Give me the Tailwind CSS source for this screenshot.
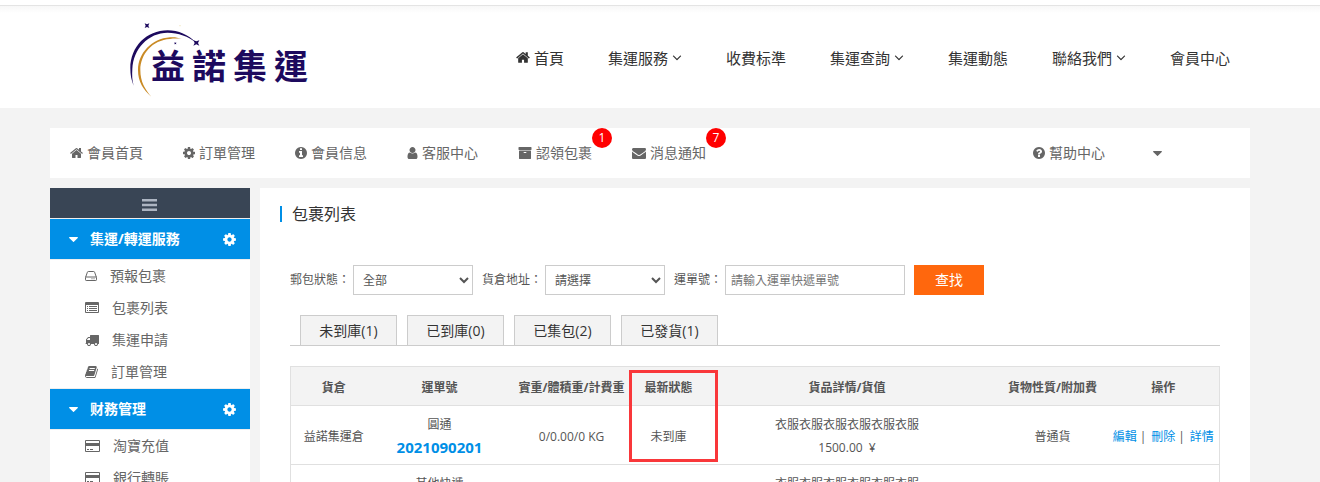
<!DOCTYPE html>
<html lang="zh-Hant">
<head>
    <meta charset="UTF-8">
    <meta name="viewport" content="width=device-width, initial-scale=1.0">
    <title>益諾集運 - 包裹列表</title>
    <script src="https://cdn.jsdelivr.net/npm/@tailwindcss/browser@4"></script>
</head>
<body class="h-screen overflow-hidden bg-[#f3f3f3] font-['Open_Sans','Noto_Sans_CJK_TC',sans-serif] text-xs text-[#555]">

    <!-- Icon sprite -->
    <svg class="hidden">
        <symbol id="i-home" viewBox="64 0 1664 1792"><path d="M1472 992v480q0 26-19 45t-45 19h-384v-384h-256v384h-384q-26 0-45-19t-19-45v-480q0-1 .5-3t.5-3l575-474 575 474q1 2 1 6zm223-69l-62 74q-8 9-21 11h-3q-13 0-21-7l-692-577-692 577q-12 8-24 7-13-2-21-11l-62-74q-8-10-7-23.5t11-21.5l719-599q32-26 76-26t76 26l244 204v-195q0-14 9-23t23-9h192q14 0 23 9t9 23v408l219 182q10 8 11 21.5t-7 23.5z"/></symbol>
        <symbol id="i-cog" viewBox="128 0 1536 1792"><path d="M1152 896q0-106-75-181t-181-75-181 75-75 181 75 181 181 75 181-75 75-181zm512-109v222q0 12-8 23t-20 13l-185 28q-19 54-39 91 35 50 107 138 10 12 10 25t-9 23q-27 37-99 108t-94 71q-12 0-26-9l-138-108q-44 23-91 38-16 136-29 186-7 28-36 28h-222q-14 0-24.5-8.5t-11.5-21.5l-28-184q-49-16-90-37l-141 107q-10 9-25 9-14 0-25-11-126-114-165-168-7-10-7-23 0-12 8-23 15-21 51-66.5t54-70.5q-27-50-41-99l-183-27q-13-2-21-12.5t-8-23.5v-222q0-12 8-23t19-13l186-28q14-46 39-92-40-57-107-138-10-12-10-24 0-10 9-23 26-36 98.5-107.5t94.5-71.5q13 0 26 10l138 107q44-23 91-38 16-136 29-186 7-28 36-28h222q14 0 24.5 8.5t11.5 21.5l28 184q49 16 90 37l142-107q9-9 24-9 13 0 25 10 129 119 165 170 7 8 7 22 0 12-8 23-15 21-51 66.5t-54 70.5q26 50 41 98l183 28q13 2 21 12.5t8 23.5z"/></symbol>
        <symbol id="i-info" viewBox="128 0 1536 1792"><path d="M1152 1376v-160q0-14-9-23t-23-9h-96v-512q0-14-9-23t-23-9h-320q-14 0-23 9t-9 23v160q0 14 9 23t23 9h96v320h-96q-14 0-23 9t-9 23v160q0 14 9 23t23 9h448q14 0 23-9t9-23zm-128-896v-160q0-14-9-23t-23-9h-192q-14 0-23 9t-9 23v160q0 14 9 23t23 9h192q14 0 23-9t9-23zm640 416q0 209-103 385.5t-279.5 279.5-385.5 103-385.5-103-279.5-279.5-103-385.5 103-385.5 279.5-279.5 385.5-103 385.5 103 279.5 279.5 103 385.5z"/></symbol>
        <symbol id="i-user" viewBox="256 0 1280 1792"><path d="M1536 1399q0 109-62.5 187t-150.5 78h-854q-88 0-150.5-78t-62.5-187q0-85 8.5-160.5t31.5-152 58.5-131 94-89 134.5-34.5q131 128 313 128t313-128q76 0 134.5 34.5t94 89 58.5 131 31.5 152 8.5 160.5zm-256-887q0 159-112.5 271.5t-271.5 112.5-271.5-112.5-112.5-271.5 112.5-271.5 271.5-112.5 271.5 112.5 112.5 271.5z"/></symbol>
        <symbol id="i-archive" viewBox="0 0 1792 1792"><path d="M1088 832q0-26-19-45t-45-19h-256q-26 0-45 19t-19 45 19 45 45 19h256q26 0 45-19t19-45zm576-192v960q0 26-19 45t-45 19h-1408q-26 0-45-19t-19-45v-960q0-26 19-45t45-19h1408q26 0 45 19t19 45zm64-448v256q0 26-19 45t-45 19h-1536q-26 0-45-19t-19-45v-256q0-26 19-45t45-19h1536q26 0 45 19t19 45z"/></symbol>
        <symbol id="i-envelope" viewBox="0 0 1792 1792"><path d="M1792 710v794q0 66-47 113t-113 47h-1472q-66 0-113-47t-47-113v-794q44 49 101 87 362 246 497 345 57 42 92.5 65.5t94.5 48 110 24.5h2q51 0 110-24.5t94.5-48 92.5-65.5q170-123 498-345 57-39 100-87zm0-294q0 79-49 151t-122 123q-376 261-468 325-10 7-42.5 31t-54 38.5-52 32.5-57.5 27-50 9h-2q-23 0-50-9t-57.5-27-52-32.5-54-38.5-42.5-31q-91-64-262-182.5t-205-142.5q-62-42-117-115.5t-55-136.5q0-78 41.5-130t118.5-52h1472q65 0 112.5 47t47.5 113z"/></symbol>
        <symbol id="i-question" viewBox="128 0 1536 1792"><path d="M1024 1376v-192q0-14-9-23t-23-9h-192q-14 0-23 9t-9 23v192q0 14 9 23t23 9h192q14 0 23-9t9-23zm256-672q0-88-55.5-163t-138.5-116-170-41q-243 0-371 213-15 24 8 42l132 100q7 6 19 6 16 0 25-12 53-68 86-92 34-24 86-24 48 0 85.5 26t37.5 59q0 38-20 61t-68 45q-63 28-115.5 86.5t-52.5 125.5v36q0 14 9 23t23 9h192q14 0 23-9t9-23q0-19 21.5-49.5t54.5-49.5q32-18 49-28.5t46-35 44.5-48 28-60.5 12.5-81zm384 192q0 209-103 385.5t-279.5 279.5-385.5 103-385.5-103-279.5-279.5-103-385.5 103-385.5 279.5-279.5 385.5-103 385.5 103 279.5 279.5 103 385.5z"/></symbol>
        <symbol id="i-caret" viewBox="384 640 1024 576"><path d="M1408 704q0 26-19 45l-448 448q-19 19-45 19t-45-19l-448-448q-19-19-19-45t19-45 45-19h896q26 0 45 19t19 45z"/></symbol>
        <symbol id="i-angle" viewBox="320 0 1152 1792"><path d="M1395 736q0 13-10 23l-466 466q-10 10-23 10t-23-10l-466-466q-10-10-10-23t10-23l50-50q10-10 23-10t23 10l393 393 393-393q10-10 23-10t23 10l50 50q10 10 10 23z"/></symbol>
        <symbol id="i-hdd" viewBox="0 0 12 14"><path d="M.5 8.5 2.4 3.2q.2-.7.9-.7h5.4q.7 0 .9.7l1.9 5.3v2.3q0 .7-.7.7H1.2q-.7 0-.7-.7zM.5 8h11" fill="none" stroke="currentColor"/><path d="M6.5 9.300h1v1h-1zM8.500 9.300h1v1h-1z"/></symbol>
        <symbol id="i-list" viewBox="0 0 14 14"><path d="M1 1h12q1 0 1 1v9q0 1-1 1H1q-1 0-1-1V2q0-1 1-1zm0 3v7h12V4zM2 5h1v1H2zm2 0h8v1H4zM2 7h1v1H2zm2 0h8v1H4zM2 9h1v1H2zm2 0h8v1H4z" fill-rule="evenodd"/></symbol>
        <symbol id="i-truck" viewBox="0 0 1792 1792"><path d="M640 1408q0-52-38-90t-90-38-90 38-38 90 38 90 90 38 90-38 38-90zm-384-512h384v-256h-158q-13 0-22 9l-195 195q-9 9-9 22v30zm1280 512q0-52-38-90t-90-38-90 38-38 90 38 90 90 38 90-38 38-90zm256-1088v1024q0 15-4 26.5t-13.5 18.5-16.5 11.5-23.5 6-22.5 2-25.5 0-22.5-.5q0 106-75 181t-181 75-181-75-75-181h-384q0 106-75 181t-181 75-181-75-75-181h-64q-3 0-22.5.5t-25.5 0-22.5-2-23.5-6-16.5-11.5-13.5-18.5-4-26.5q0-26 19-45t45-19v-320q0-8-.5-35t0-38 2.5-34.5 6.5-37 14-30.5 22.5-30l198-198q19-19 50.5-32t58.5-13h160v-192q0-26 19-45t45-19h1024q26 0 45 19t19 45z"/></symbol>
        <symbol id="i-book" viewBox="64 0 1664 1792"><path d="M1703 478q40 57 18 129l-275 906q-19 64-76.5 107.5t-122.5 43.5h-923q-77 0-148.5-53.5t-99.5-131.5q-24-67-2-127 0-4 3-27t4-37q1-8-3-21.5t-3-19.5q2-11 8-21t16.5-23.5 16.5-23.5q23-38 45-91.5t30-91.5q3-10 .5-30t-.5-28q3-11 17-28t17-23q21-36 42-92t25-90q1-9-2.5-32t.5-28q4-13 22-30.5t22-22.5q19-26 42.5-84.5t27.5-96.5q1-8-3-25.5t-2-26.5q2-8 9-18t18-23 17-21q8-12 16.5-30.5t15-35 16-36 19.5-32 26.5-23.5 36-11.5 47.5 5.5l-1 3q38-9 51-9h761q74 0 114 56t18 130l-274 906q-36 119-71.5 153.5t-128.5 34.5h-869q-27 0-38 15-11 16-1 43 24 70 144 70h923q29 0 56-15.5t35-41.5l300-987q7-22 5-57 38 15 59 43zm-1064 2q-4 13 2 22.5t20 9.5h608q13 0 25.5-9.5t16.5-22.5l21-64q4-13-2-22.5t-20-9.5h-608q-13 0-25.5 9.5t-16.5 22.5zm-83 256q-4 13 2 22.5t20 9.5h608q13 0 25.5-9.5t16.5-22.5l21-64q4-13-2-22.5t-20-9.5h-608q-13 0-25.5 9.5t-16.5 22.5z"/></symbol>
        <symbol id="i-card" viewBox="0 0 15 14"><path d="M1 1h13q1 0 1 1v10q0 1-1 1H1q-1 0-1-1V2q0-1 1-1zm0 1v2h13V2zm0 5v5h13V7zm1 3h2v1H2zm3 0h3v1H5z" fill-rule="evenodd"/></symbol>
    </svg>

    <!-- Header -->
    <header class="bg-white pt-[5px]">
        <div class="h-2 border-t border-[#e4e4e4] bg-gradient-to-b from-[#f7f7f7] to-white"></div>
        <div class="flex h-[95px] items-start justify-between pt-[7px] pr-[90px] pl-[127px]">
            <a href="#" class="relative flex h-20 items-center pt-3 pl-6">
                <svg class="absolute top-0 left-0 h-20 w-[77px]" viewBox="51 60 231 240">
                    <path fill="#1d0a5e" d="M258 127C235 105 205 91 173 91 110 91 61 140 61 205c0 20 3 36 10 52-5-17-5-32-4-50 2-60 48-109 106-109 32 0 62 12 85 29z"/>
                    <path fill="#c98a24" d="M215 117c-14-6-25-6-35-5-55 4-96 48-96 98 0 35 16 60 40 80-19-22-33-45-33-80 0-47 36-90 89-93 10-2 25-2 35 0z"/>
                    <path fill="#1d0a5e" d="M104 70l7 3 7-3-3 7 3 7-7-3-7 3 3-7zM250 121l9 3 9-3-4 8 4 8-9-4-9 4 4-8zM193 127l3 1 3-1-1 3 1 3-3-1-3 1 1-3z"/>
                    <circle cx="210" cy="77" r="2" fill="#efe3b8"/>
                </svg>
                <span class="relative flex gap-[7px] text-[34px] leading-10 font-bold text-[#1d0a5e]"><span>益</span><span>諾</span><span>集</span><span>運</span></span>
            </a>
            <nav class="flex h-[76px] items-center gap-11 text-[15px] text-[#333]">
                <a href="#" class="flex items-center gap-1"><svg class="h-[15px] w-[14px] fill-current"><use href="#i-home"/></svg>首頁</a>
                <a href="#" class="flex items-center gap-1">集運服務<svg class="h-[15px] w-[10px] fill-current"><use href="#i-angle"/></svg></a>
                <a href="#">收費标準</a>
                <a href="#" class="flex items-center gap-1">集運查詢<svg class="h-[15px] w-[10px] fill-current"><use href="#i-angle"/></svg></a>
                <a href="#">集運動態</a>
                <a href="#" class="flex items-center gap-1">聯絡我們<svg class="h-[15px] w-[10px] fill-current"><use href="#i-angle"/></svg></a>
                <a href="#">會員中心</a>
            </nav>
        </div>
    </header>

    <div class="pt-5 pr-[70px] pl-[50px]">
        <!-- Member bar -->
        <nav class="flex h-[50px] bg-white text-sm text-[#666]">
            <a href="#" class="flex items-center gap-1 px-5"><svg class="h-3.5 w-[13px] fill-current"><use href="#i-home"/></svg>會員首頁</a>
            <a href="#" class="flex items-center gap-1 px-5"><svg class="h-3.5 w-3 fill-current"><use href="#i-cog"/></svg>訂單管理</a>
            <a href="#" class="flex items-center gap-1 px-5"><svg class="h-3.5 w-3 fill-current"><use href="#i-info"/></svg>會員信息</a>
            <a href="#" class="flex items-center gap-1 px-5"><svg class="h-3.5 w-[11px] fill-current"><use href="#i-user"/></svg>客服中心</a>
            <a href="#" class="relative flex items-center gap-1 px-5"><svg class="h-3.5 w-3.5 fill-current"><use href="#i-archive"/></svg>認領包裹<span class="absolute top-0 right-0 size-5 rounded-full bg-[#f00] text-center text-xs leading-5 text-white">1</span></a>
            <a href="#" class="relative flex items-center gap-1 px-5"><svg class="h-3.5 w-3.5 fill-current"><use href="#i-envelope"/></svg>消息通知<span class="absolute top-0 right-0 size-5 rounded-full bg-[#f00] text-center text-xs leading-5 text-white">7</span></a>
            <div class="ml-auto flex gap-12 pr-[88px]">
                <a href="#" class="flex items-center gap-1"><svg class="h-3.5 w-3 fill-current"><use href="#i-question"/></svg>幫助中心</a>
                <button type="button" aria-label="更多"><svg class="h-[5px] w-[9px] fill-current"><use href="#i-caret"/></svg></button>
            </div>
        </nav>

        <div class="mt-2.5 flex gap-2.5">
            <!-- Sidebar -->
            <aside class="w-[200px] shrink-0 bg-white text-sm text-[#666]">
                <button type="button" aria-label="收起選單" class="flex h-[30px] w-full items-center justify-center bg-[#394555] pt-1 text-[#adb5c2]">
                    <svg class="h-3 w-4 fill-current" viewBox="0 0 16 12"><path d="M0 0h15v2.600H0zM0 4.700h15v2.600H0zM0 9.400h15V12H0z"/></svg>
                </button>

                <h3 class="flex h-[42px] items-center border-y border-[#eee] bg-[#008fe6] pr-3.5 pl-[19px] font-bold text-white">
                    <svg class="h-[5px] w-[9px] fill-current"><use href="#i-caret"/></svg>
                    <span class="ml-3">集運/轉運服務</span>
                    <svg class="ml-auto h-[15px] w-[13px] fill-current"><use href="#i-cog"/></svg>
                </h3>
                <ul>
                    <li><a href="#" class="flex h-8 items-center gap-[13px] pl-[35px]"><svg class="h-3.5 w-3 fill-current"><use href="#i-hdd"/></svg>預報包裹</a></li>
                    <li><a href="#" class="flex h-8 items-center gap-[13px] pl-[35px]"><svg class="h-3.5 w-3.5 fill-current"><use href="#i-list"/></svg>包裹列表</a></li>
                    <li><a href="#" class="flex h-8 items-center gap-[13px] pl-[35px]"><svg class="h-3.5 w-3.5 fill-current"><use href="#i-truck"/></svg>集運申請</a></li>
                    <li><a href="#" class="flex h-8 items-center gap-[13px] pl-[35px]"><svg class="h-3.5 w-[13px] fill-current"><use href="#i-book"/></svg>訂單管理</a></li>
                </ul>

                <h3 class="flex h-[42px] items-center border-y border-[#eee] bg-[#008fe6] pr-3.5 pl-[19px] font-bold text-white">
                    <svg class="h-[5px] w-[9px] fill-current"><use href="#i-caret"/></svg>
                    <span class="ml-3">财務管理</span>
                    <svg class="ml-auto h-[15px] w-[13px] fill-current"><use href="#i-cog"/></svg>
                </h3>
                <ul>
                    <li><a href="#" class="flex h-8 items-center gap-[13px] pl-[35px]"><svg class="h-3.5 w-[15px] fill-current"><use href="#i-card"/></svg>淘寶充值</a></li>
                    <li><a href="#" class="flex h-8 items-center gap-[13px] pl-[35px]"><svg class="h-3.5 w-[15px] fill-current"><use href="#i-card"/></svg>銀行轉賬</a></li>
                </ul>
            </aside>

            <!-- Parcel list -->
            <main class="min-w-0 flex-1 bg-white px-[30px] pt-[18px]">
                <h1 class="-ml-2.5 border-l-2 border-[#008fe6] pl-2.5 text-base leading-4 text-[#333]">包裹列表</h1>

                <form class="mt-[43px] flex items-center">
                    <label for="status">郵包狀態：</label>
                    <select id="status" class="ml-[3px] h-[30px] w-[120px] border border-[#ccc] bg-white pl-[5px]">
                        <option>全部</option>
                    </select>
                    <label for="warehouse" class="ml-[9px]">貨倉地址：</label>
                    <select id="warehouse" class="ml-[3px] h-[30px] w-[120px] border border-[#ccc] bg-white pl-[5px]">
                        <option>請選擇</option>
                    </select>
                    <label for="waybill" class="ml-[9px]">運單號：</label>
                    <input id="waybill" type="text" placeholder="請輸入運單快遞單號" class="ml-[3px] h-[30px] w-[180px] border border-[#ccc] px-[5px] placeholder:text-[#757575]">
                    <button type="submit" class="ml-[9px] h-[30px] w-[70px] bg-[#ff670d] text-sm text-white">查找</button>
                </form>

                <div class="mt-5 flex gap-2.5 border-b border-[#ccc] px-2.5 text-sm text-[#333]">
                    <button type="button" class="h-[30px] min-w-[97px] border border-b-0 border-[#ccc] bg-[#f3f3f3] px-4">未到庫(1)</button>
                    <button type="button" class="h-[30px] min-w-[97px] border border-b-0 border-[#ccc] bg-[#f3f3f3] px-4">已到庫(0)</button>
                    <button type="button" class="h-[30px] min-w-[97px] border border-b-0 border-[#ccc] bg-[#f3f3f3] px-4">已集包(2)</button>
                    <button type="button" class="h-[30px] min-w-[97px] border border-b-0 border-[#ccc] bg-[#f3f3f3] px-4">已發貨(1)</button>
                </div>

                <div class="relative mt-5">
                    <table class="w-full table-fixed border border-[#e0e0e0] text-center leading-[23px]">
                        <colgroup>
                            <col class="w-[86px]">
                            <col class="w-[126px]">
                            <col class="w-[138px]">
                            <col class="w-[56px]">
                            <col>
                            <col class="w-[110px]">
                            <col class="w-[112px]">
                        </colgroup>
                        <thead class="bg-[#f3f3f3]">
                            <tr class="h-[39px] border-b border-[#e0e0e0] whitespace-nowrap">
                                <th class="pt-0.5">貨倉</th>
                                <th class="pt-0.5">運單號</th>
                                <th class="pt-0.5">實重/體積重/計費重</th>
                                <th class="pt-0.5">最新狀態</th>
                                <th class="pt-0.5">貨品詳情/貨值</th>
                                <th class="pt-0.5">貨物性質/附加費</th>
                                <th class="pt-0.5">操作</th>
                            </tr>
                        </thead>
                        <tbody>
                            <tr class="border-b border-[#e0e0e0]">
                                <td class="pt-0.5">益諾集運倉</td>
                                <td class="pt-[7px] pb-[5px]">圓通<a href="#" class="block text-[15px] font-bold text-[#008fe6]">2021090201</a></td>
                                <td class="pt-0.5">0/0.00/0 KG</td>
                                <td class="pt-0.5">未到庫</td>
                                <td class="pt-0.5">衣服衣服衣服衣服衣服衣服<br>1500.00 &nbsp;¥</td>
                                <td class="pt-0.5">普通貨</td>
                                <td class="pt-0.5">
                                    <div class="flex justify-center gap-[3px]">
                                        <a href="#" class="text-[#008fe6]">編輯</a>|
                                        <a href="#" class="ml-0.5 text-[#008fe6]">刪除</a>|
                                        <a href="#" class="ml-0.5 text-[#008fe6]">詳情</a>
                                    </div>
                                </td>
                            </tr>
                            <tr class="border-b border-[#e0e0e0]">
                                <td></td>
                                <td class="pt-[7px] pb-[5px]">其他快遞<br>&nbsp;</td>
                                <td></td>
                                <td></td>
                                <td class="pt-0.5">衣服衣服衣服衣服衣服衣服<br>&nbsp;</td>
                                <td></td>
                                <td></td>
                            </tr>
                        </tbody>
                    </table>
                    <!-- Highlight around the status column -->
                    <div class="pointer-events-none absolute top-1 left-[339px] h-[92px] w-[89px] border-3 border-[#f9373a]"></div>
                </div>
            </main>
        </div>
    </div>
</body>
</html>
